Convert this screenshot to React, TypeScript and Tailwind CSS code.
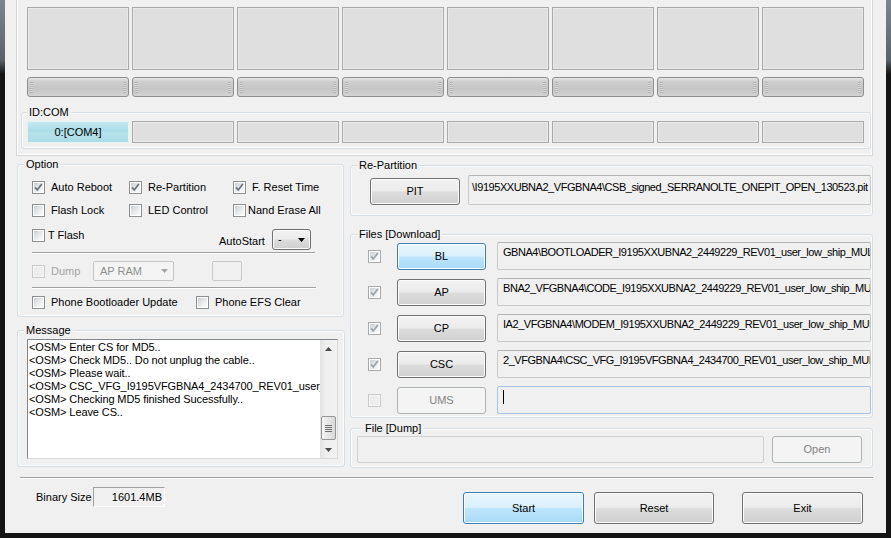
import React from 'react'

// Odin3 style flashing window

const cols = [0, 1, 2, 3, 4, 5, 6, 7]

const messages = [
  '<OSM> Enter CS for MD5..',
  '<OSM> Check MD5.. Do not unplug the cable..',
  '<OSM> Please wait..',
  '<OSM> CSC_VFG_I9195VFGBNA4_2434700_REV01_user_low_ship_MULTI_CERT.tar.md5 is valid.',
  '<OSM> Checking MD5 finished Sucessfully..',
  '<OSM> Leave CS..',
]

const files = [
  { name: 'BL', hot: true, path: 'GBNA4\\BOOTLOADER_I9195XXUBNA2_2449229_REV01_user_low_ship_MULTI_CERT.tar.md5' },
  { name: 'AP', hot: false, path: 'BNA2_VFGBNA4\\CODE_I9195XXUBNA2_2449229_REV01_user_low_ship_MULTI_CERT.tar.md5' },
  { name: 'CP', hot: false, path: 'IA2_VFGBNA4\\MODEM_I9195XXUBNA2_2449229_REV01_user_low_ship_MULTI_CERT.tar.md5' },
  { name: 'CSC', hot: false, path: '2_VFGBNA4\\CSC_VFG_I9195VFGBNA4_2434700_REV01_user_low_ship_MULTI_CERT.tar.md5' },
]

const btnNormal =
  'flex items-center justify-center rounded-[3px] border border-[#707070] bg-[linear-gradient(#f2f2f2,#ebebeb_49%,#dddddd_51%,#cfcfcf)] shadow-[inset_0_0_0_1px_#fbfbfb]'
const btnHot =
  'flex items-center justify-center rounded-[3px] border border-[#3c7fb1] bg-[linear-gradient(#eaf6fd,#d9f0fc_49%,#bee6fd_51%,#a7d9f5)] shadow-[inset_0_0_0_1px_#fbfdff]'
const btnOff =
  'flex items-center justify-center rounded-[3px] border border-[#adb2b5] bg-[#f4f4f4] text-[#838383]'

const Check = ({ checked = false, disabled = false, dim = false }: { checked?: boolean; disabled?: boolean; dim?: boolean }) => (
  <span
    className={`relative block w-[13px] h-[13px] shrink-0 border p-[1px] ${
      disabled ? 'border-[#cacaca] bg-[#f6f6f6]' : dim ? 'border-[#a9a9a9] bg-white' : 'border-[#8e8f8f] bg-white'
    }`}
  >
    <span
      className={`block w-full h-full ${
        disabled ? 'bg-[#eeeeee]' : 'bg-[linear-gradient(135deg,#cdd1d6,#eef0f1_65%,#fafafa)]'
      }`}
    />
    {checked && (
      <svg className="absolute inset-0" width="11" height="11" viewBox="0 0 11 11">
        <path d="M2 5.4 L4.3 8 L8.8 2" fill="none" stroke={dim ? '#9ba2aa' : '#6b737d'} strokeWidth="1.7" />
      </svg>
    )}
  </span>
)

const Opt = ({
  label,
  checked = false,
  gap = 'gap-[6px]',
  className = '',
}: {
  label: string
  checked?: boolean
  gap?: string
  className?: string
}) => (
  <div className={`flex items-center ${gap} ${className}`}>
    <Check checked={checked} />
    <span className="leading-[13px] whitespace-nowrap">{label}</span>
  </div>
)

const Group = ({
  title,
  className = '',
  labelPos = 'left-[6px]',
  children,
}: {
  title: string
  className?: string
  labelPos?: string
  children?: React.ReactNode
}) => (
  <div className={`relative rounded-[3px] border border-[#d5dfe5] shadow-[inset_0_0_0_1px_#fafafa] ${className}`}>
    <span className={`absolute -top-[7px] ${labelPos} px-[2px] bg-[#f0f0f0] leading-[13px] whitespace-nowrap`}>{title}</span>
    {children}
  </div>
)

const Sep = ({ className = '' }: { className?: string }) => (
  <div className={`h-[2px] border-t border-b border-t-[#a0a0a0] border-b-white ${className}`} />
)

const Arrow = ({ color = '#000', up = false }: { color?: string; up?: boolean }) => (
  <svg width="7" height="4" viewBox="0 0 7 4">
    <path d={up ? 'M0 4 L3.5 0 L7 4 Z' : 'M0 0 L7 0 L3.5 4 Z'} fill={color} />
  </svg>
)

const Progress = () => (
  <div className="w-[102px] h-[20px] rounded-[3px] border border-[#8f8f8f] bg-[linear-gradient(#e6e6e6,#cfcfcf_18%,#c5c5c5_60%,#d3d3d3)] flex items-center justify-between px-[2px]">
    <span className="w-[3px] h-[11px] bg-[repeating-linear-gradient(#b3b3b3_0_1px,#d8d8d8_1px_2px)]" />
    <span className="w-[3px] h-[11px] bg-[repeating-linear-gradient(#b3b3b3_0_1px,#d8d8d8_1px_2px)]" />
  </div>
)

const TopPanel = () => (
  <div className="ml-[11px] w-[857px] h-[156px] shrink-0 border-x border-b border-[#d6d6d6] shadow-[inset_1px_0_0_#fff,inset_-1px_0_0_#fff,inset_0_-1px_0_#fff]">
    <div className="ml-[10px] mt-[7px] flex gap-[3px]">
      {cols.map((i) => (
        <div key={i} className="w-[102px] h-[63px] border border-[#a9a9a9] bg-[#dfdfdf] shadow-[inset_0_0_0_1px_#e9e9e9]" />
      ))}
    </div>
    <div className="ml-[10px] mt-[7px] flex gap-[3px]">
      {cols.map((i) => (
        <Progress key={i} />
      ))}
    </div>
    <Group title="ID:COM" labelPos="left-[5px]" className="ml-[4px] mt-[15px] w-[850px] h-[37px] pl-[5px] pt-[8px]">
      <div className="flex gap-[3px]">
        {cols.map((i) =>
          i === 0 ? (
            <div
              key={i}
              className="w-[102px] h-[22px] border border-[#e4f2f5] bg-[linear-gradient(#c4eaf1,#a9dce7_45%,#b4e2eb_55%,#aadce7)] flex items-center justify-center"
            >
              0:[COM4]
            </div>
          ) : (
            <div key={i} className="w-[102px] h-[22px] border border-[#a9a9a9] bg-[#dfdfdf] shadow-[inset_0_0_0_1px_#e9e9e9]" />
          )
        )}
      </div>
    </Group>
  </div>
)

const Scrollbar = () => (
  <div className="w-[17px] h-full flex flex-col items-center bg-[linear-gradient(90deg,#e2e2e2,#efefef_35%,#f2f2f2)]">
    <div className="h-[17px] flex items-center justify-center">
      <Arrow up color="#4a4a4a" />
    </div>
    <div className="flex-1" />
    <div className="w-[15px] h-[24px] rounded-[2px] border border-[#979797] bg-[linear-gradient(90deg,#f4f4f4,#e6e6e6_50%,#d8d8d8)] flex flex-col items-center justify-center gap-[1px]">
      <span className="w-[7px] h-[1px] bg-[#6f6f6f]" />
      <span className="w-[7px] h-[1px] bg-[#6f6f6f]" />
      <span className="w-[7px] h-[1px] bg-[#6f6f6f]" />
      <span className="w-[7px] h-[1px] bg-[#6f6f6f]" />
    </div>
    <div className="mt-[1px] h-[17px] flex items-center justify-center">
      <Arrow color="#4a4a4a" />
    </div>
  </div>
)

export default function App() {
  return (
    <div className="w-[891px] h-[538px] flex bg-[linear-gradient(#7c858e,#5a6169_60px,#141414_74px)] font-['Liberation_Sans',Arial,sans-serif] text-[11px] leading-[13px] text-black">
      <div className="ml-[5px] w-[881px] h-[533px] bg-[#f0f0f0] flex flex-col">
        <TopPanel />

        <div className="flex">
          {/* left column */}
          <div className="ml-[12px] w-[328px] flex flex-col">
            <Group title="Option" className="mt-[8px] w-[327px] h-[153px] pl-[14px] pt-[16px]">
              <div className="flex">
                <Opt label="Auto Reboot" checked className="w-[97px]" />
                <Opt label="Re-Partition" checked className="w-[104px]" />
                <Opt label="F. Reset Time" checked />
              </div>
              <div className="flex mt-[10px]">
                <Opt label="Flash Lock" className="w-[97px]" />
                <Opt label="LED Control" className="w-[104px]" />
                <Opt label="Nand Erase All" gap="gap-[2px]" className="-mt-[1px]" />
              </div>
              <div className="flex items-start mt-[12px]">
                <Opt label="T Flash" gap="gap-[3px]" className="w-[187px]" />
                <span className="w-[53px] mt-[6px]">AutoStart</span>
                <div className={`${btnNormal} w-[39px] h-[21px] !justify-between pl-[5px] pr-[5px]`}>
                  <span>-</span>
                  <Arrow />
                </div>
              </div>
              <Sep className="mt-[2px] w-[283px]" />
              <div className="flex items-center mt-[7px] h-[20px]">
                <div className="w-[61px] flex items-center gap-[6px] text-[#a3a3a3]">
                  <Check disabled />
                  <span>Dump</span>
                </div>
                <div className="w-[81px] h-[20px] rounded-[2px] border border-[#c4c4c4] bg-[#f4f4f4] text-[#8f8f8f] flex items-center justify-between pl-[6px] pr-[5px]">
                  <span>AP RAM</span>
                  <Arrow color="#a5a5a5" />
                </div>
                <div className="ml-[38px] w-[30px] h-[20px] rounded-[2px] border border-[#c9c9c9] bg-[#f0f0f0]" />
              </div>
              <Sep className="mt-[6px] w-[284px]" />
              <div className="flex mt-[7px]">
                <Opt label="Phone Bootloader Update" className="w-[164px]" />
                <Opt label="Phone EFS Clear" />
              </div>
            </Group>

            <Group title="Message" className="mt-[13px] w-[328px] h-[137px] pl-[9px] pt-[8px]">
              <div className="w-[311px] h-[120px] flex bg-white border border-t-[#828790] border-l-[#828790] border-r-[#d9d9d9] border-b-[#d9d9d9]">
                <div className="flex-1 overflow-hidden pl-[1px] pt-[1px] tracking-[-0.1px]">
                  {messages.map((m, i) => (
                    <div key={i} className="whitespace-nowrap leading-[13px]">
                      {m}
                    </div>
                  ))}
                </div>
                <Scrollbar />
              </div>
            </Group>
          </div>

          {/* right column */}
          <div className="ml-[5px] w-[523px] flex flex-col">
            <Group title="Re-Partition" className="mt-[9px] h-[51px] pl-[19px] pt-[9px]">
              <div className="flex items-end">
                <div className={`${btnNormal} w-[90px] h-[27px]`}>PIT</div>
                <div className="ml-[8px] w-[403px] h-[30px] rounded-[2px] border border-[#c9c9c9] border-t-[#b4b4b4] bg-[#f0f0f0] overflow-hidden whitespace-nowrap pl-[3px] pt-[5px] tracking-[-0.45px]">
                  {'\\I9195XXUBNA2_VFGBNA4\\CSB_signed_SERRANOLTE_ONEPIT_OPEN_130523.pit'}
                </div>
              </div>
            </Group>

            <Group title="Files [Download]" className="mt-[18px] h-[184px] pl-[17px] pt-[7px] flex flex-col gap-[8px]">
              {files.map((f) => (
                <div key={f.name} className="h-[28px] flex items-center">
                  <Check checked dim />
                  <div className={`${f.hot ? btnHot : btnNormal} ml-[16px] w-[89px] h-[27px]`}>{f.name}</div>
                  <div className="ml-[11px] w-[374px] h-[28px] rounded-[2px] border border-[#c9c9c9] border-t-[#b4b4b4] bg-[#f0f0f0] overflow-hidden whitespace-nowrap pl-[5px] pt-[3px] tracking-[-0.45px]">
                    {f.path}
                  </div>
                </div>
              ))}
              <div className="h-[28px] flex items-center">
                <Check disabled />
                <div className={`${btnOff} ml-[16px] w-[89px] h-[27px]`}>UMS</div>
                <div className="ml-[11px] w-[374px] h-[28px] rounded-[2px] border border-[#a9c4e0] bg-[#f0f0f0] pl-[5px] pt-[3px]">
                  <span className="block w-[1px] h-[14px] bg-black" />
                </div>
              </div>
            </Group>

            <Group title="File [Dump]" labelPos="left-[12px]" className="mt-[10px] h-[40px] pl-[6px] pt-[7px]">
              <div className="flex">
                <div className="w-[407px] h-[27px] rounded-[2px] border border-[#d0d0d0] bg-[#f0f0f0]" />
                <div className={`${btnOff} ml-[8px] w-[90px] h-[27px]`}>Open</div>
              </div>
            </Group>
          </div>
        </div>

        <Sep className="mt-[9px] ml-[15px] w-[853px]" />

        <div className="flex items-start mt-[8px]">
          <span className="ml-[31px] w-[57px] mt-[4px]">Binary Size</span>
          <div className="w-[72px] h-[20px] border border-t-[#a0a0a0] border-l-[#a0a0a0] border-r-white border-b-white text-right pr-[2px] pt-[3px]">
            1601.4MB
          </div>
          <div className={`${btnHot} ml-[298px] mt-[5px] w-[121px] h-[32px]`}>Start</div>
          <div className={`${btnNormal} ml-[10px] mt-[5px] w-[120px] h-[32px]`}>Reset</div>
          <div className={`${btnNormal} ml-[28px] mt-[5px] w-[121px] h-[32px]`}>Exit</div>
        </div>
      </div>
    </div>
  )
}
